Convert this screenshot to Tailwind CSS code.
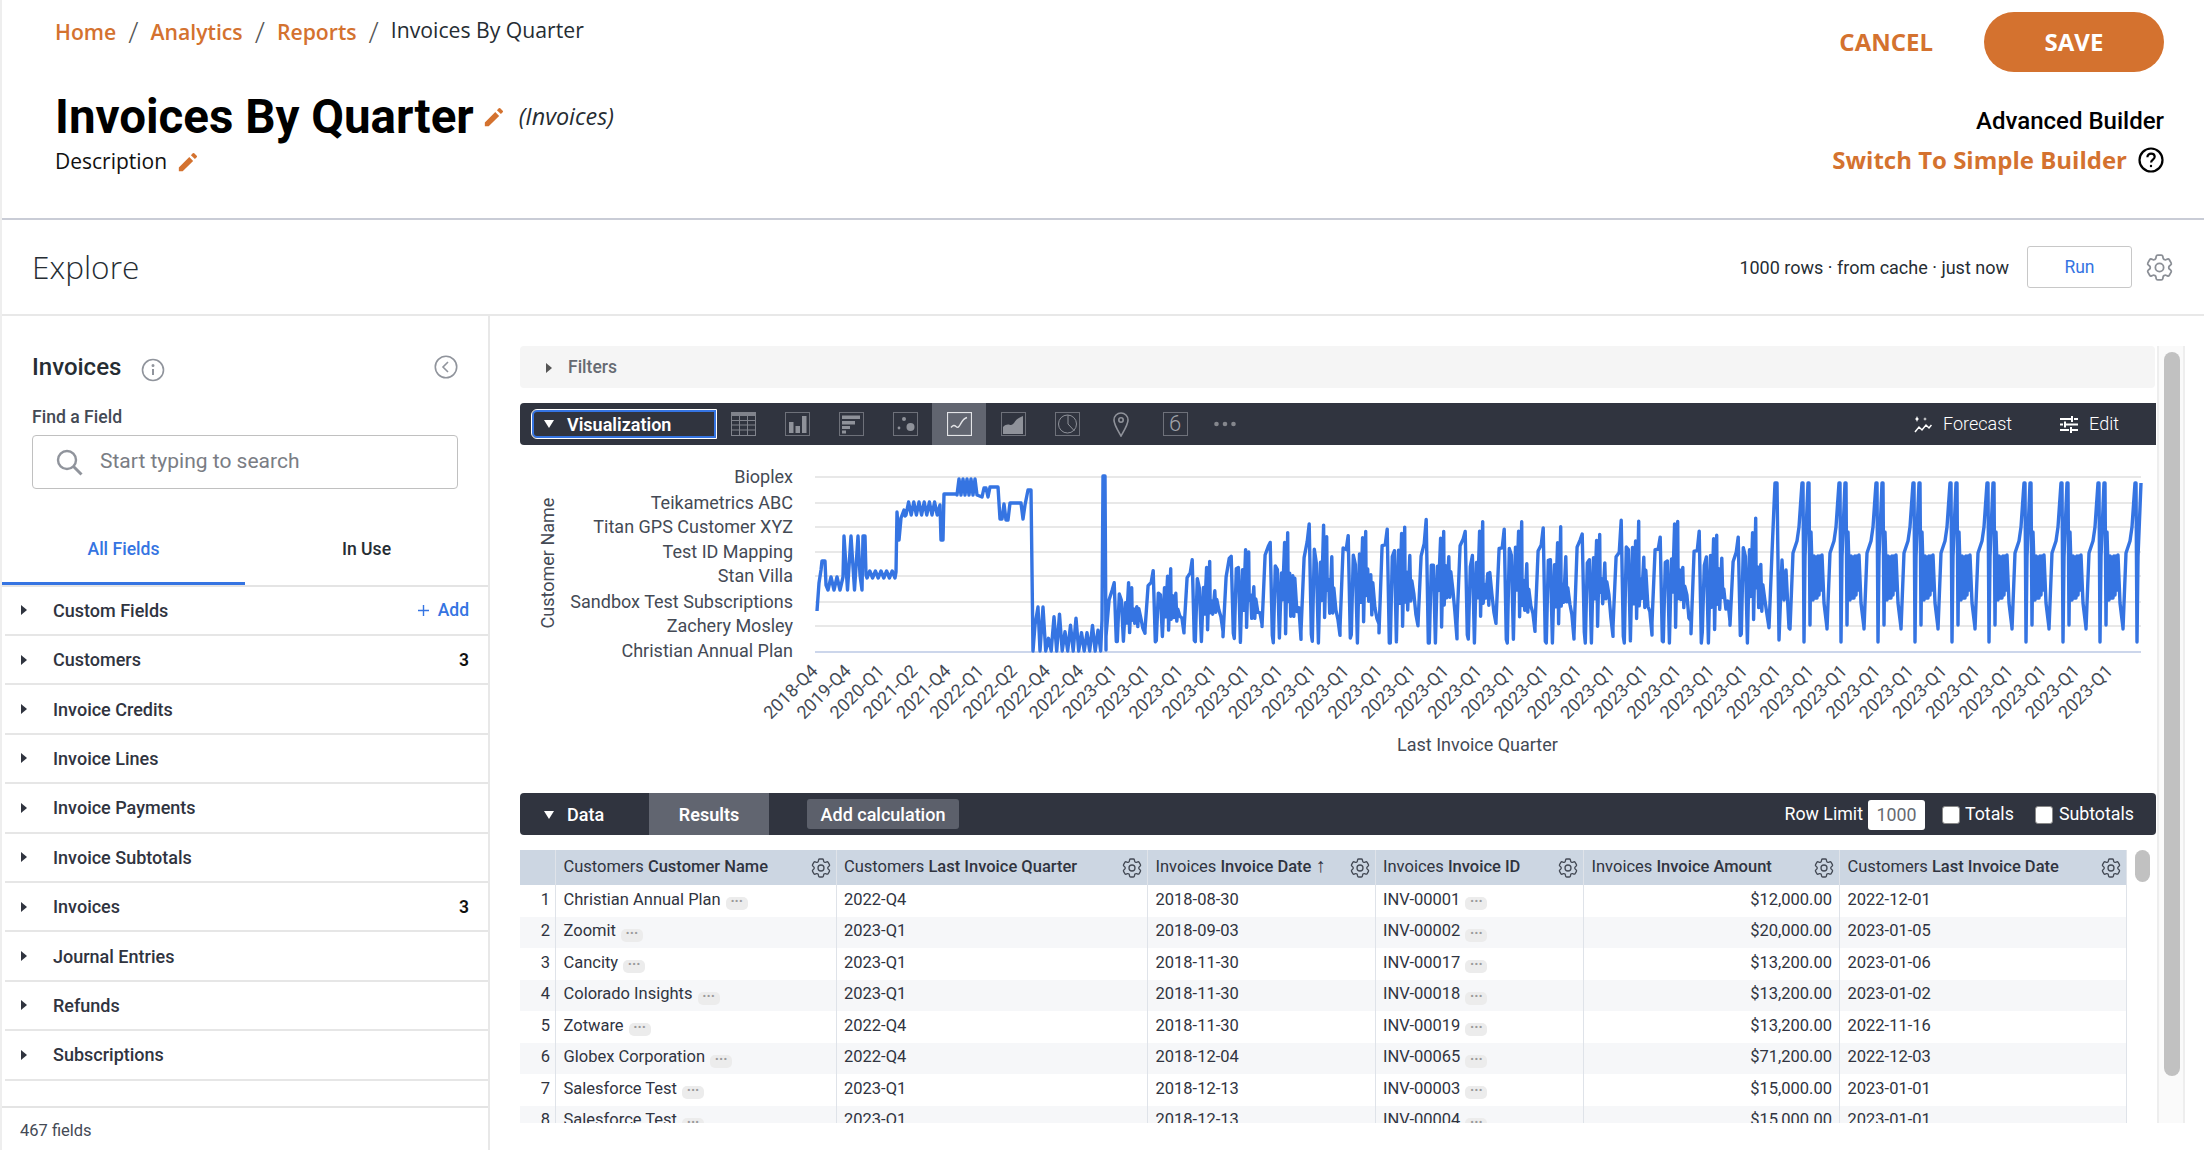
<!DOCTYPE html>
<html lang="en">
<head>
<meta charset="utf-8">
<title>Invoices By Quarter</title>
<script src="https://cdn.jsdelivr.net/npm/@tailwindcss/browser@4"></script>
</head>
<body class="bg-white font-[family-name:Roboto,sans-serif] text-[#30343f]">
<svg class="hidden">
  <symbol id="gear" viewBox="0 0 24 24"><path fill="none" stroke="currentColor" stroke-width="1.3" d="M9.594 3.94c.09-.542.56-.94 1.11-.94h2.593c.55 0 1.02.398 1.11.94l.213 1.281c.063.374.313.686.645.87.074.04.147.083.22.127.325.196.72.257 1.075.124l1.217-.456a1.125 1.125 0 0 1 1.37.49l1.296 2.247a1.125 1.125 0 0 1-.26 1.431l-1.003.827c-.293.241-.438.613-.43.992a7.723 7.723 0 0 1 0 .255c-.008.378.137.75.43.991l1.004.827c.424.35.534.955.26 1.43l-1.298 2.247a1.125 1.125 0 0 1-1.369.491l-1.217-.456c-.355-.133-.75-.072-1.076.124a6.47 6.47 0 0 1-.22.128c-.331.183-.581.495-.644.869l-.213 1.281c-.09.543-.56.94-1.11.94h-2.594c-.55 0-1.019-.398-1.11-.94l-.213-1.281c-.062-.374-.312-.686-.644-.87a6.52 6.52 0 0 1-.22-.127c-.325-.196-.72-.257-1.076-.124l-1.217.456a1.125 1.125 0 0 1-1.369-.49l-1.297-2.247a1.125 1.125 0 0 1 .26-1.431l1.004-.827c.292-.24.437-.613.43-.991a6.932 6.932 0 0 1 0-.255c.007-.38-.138-.751-.43-.992l-1.004-.827a1.125 1.125 0 0 1-.26-1.43l1.297-2.247a1.125 1.125 0 0 1 1.37-.491l1.216.456c.356.133.751.072 1.076-.124.072-.044.146-.086.22-.128.332-.183.582-.495.644-.869l.214-1.28Z"/><circle cx="12" cy="12" r="3" fill="none" stroke="currentColor" stroke-width="1.3"/></symbol>
  <symbol id="pencil" viewBox="0 0 24 24"><path fill="currentColor" d="M2 18v4.2h4.2L17.6 10.8 13.4 6.6 2 18zM21.5 6.8a1.1 1.1 0 000-1.6l-2.7-2.7a1.1 1.1 0 00-1.6 0l-2 2 4.3 4.3 2-2z"/></symbol>
</svg>

<div class="flex h-[1150px] w-[2204px] flex-col overflow-hidden border-l-2 border-[#eeeeee]">

  <!-- Page header -->
  <header class="flex h-[220px] shrink-0 justify-between border-b-2 border-[#c9ccd6]">
    <div class="pl-[53px] pt-[18px]">
      <nav class="flex h-[28px] items-center font-[family-name:'Open_Sans',sans-serif] text-[21.2px] leading-[28px]">
        <a class="font-semibold text-[#d4722f]">Home</a>
        <span class="mx-[12px] text-[30px] font-light text-[#555]">/</span>
        <a class="font-semibold text-[#d4722f]">Analytics</a>
        <span class="mx-[12px] text-[30px] font-light text-[#555]">/</span>
        <a class="font-semibold text-[#d4722f]">Reports</a>
        <span class="mx-[12px] text-[30px] font-light text-[#555]">/</span>
        <strong class="mb-[4px] font-normal text-[#262d33]">Invoices By Quarter</strong>
      </nav>
      <div class="mt-[44px] flex h-[54px] items-center">
        <h1 class="text-[47.5px] font-bold leading-[54px] text-black">Invoices By Quarter</h1>
        <svg class="ml-[9px] h-[22px] w-[22px] text-[#d4722f]"><use href="#pencil"/></svg>
        <em class="ml-[14px] font-[family-name:'Open_Sans',sans-serif] text-[23.4px] italic text-[#262d33]">(Invoices)</em>
      </div>
      <div class="mt-[4px] flex h-[28px] items-center font-[family-name:'Open_Sans',sans-serif] text-[21px] text-[#111]">
        <p>Description</p>
        <svg class="ml-[10px] h-[22px] w-[22px] text-[#d4722f]"><use href="#pencil"/></svg>
      </div>
    </div>
    <div class="flex flex-col items-end pr-[40px] pt-[12px]">
      <div class="flex h-[60px] items-center gap-[51px] font-[family-name:'Open_Sans',sans-serif] font-bold">
        <button class="text-[24px] text-[#d4722f]">CANCEL</button>
        <button class="h-[60px] w-[180px] rounded-full bg-[#d4722f] text-[24px] text-white">SAVE</button>
      </div>
      <div class="mt-[33px] text-[24px] font-medium leading-[32px] text-black">Advanced Builder</div>
      <div class="mt-[6px] flex h-[34px] items-center">
        <a class="font-[family-name:'Open_Sans',sans-serif] text-[24px] font-bold text-[#d4722f]">Switch To Simple Builder</a>
        <svg class="ml-[11px] h-[26px] w-[26px]" viewBox="0 0 26 26" fill="none" stroke="#000" stroke-width="2.2"><circle cx="13" cy="13" r="11.5"/><path d="M9.4 10.2c0-2.2 1.6-3.6 3.7-3.6 2 0 3.6 1.3 3.6 3.2 0 2.7-3.6 2.8-3.6 5.6"/><circle cx="13" cy="19" r=".6" fill="#000" stroke-width="1.2"/></svg>
      </div>
    </div>
  </header>

  <!-- Explore bar -->
  <div class="flex h-[96px] shrink-0 items-center justify-between border-b-2 border-[#e8e8e8] pl-[30px] pr-[28px]">
    <h2 class="font-[family-name:'Open_Sans',sans-serif] text-[31.6px] font-light text-[#262d33]">Explore</h2>
    <div class="flex items-center">
      <p class="text-[18px] text-[#262d33]">1000 rows · from cache · just now</p>
      <button class="ml-[18px] h-[42px] w-[105px] rounded-[3px] border border-[#c8c8c8] text-[17.5px] text-[#3574e2]">Run</button>
      <svg class="ml-[11px] h-[33px] w-[33px] text-[#8b8f96]"><use href="#gear"/></svg>
    </div>
  </div>

  <div class="flex min-h-0 flex-1">
    <!-- Sidebar -->
    <aside class="flex w-[488px] shrink-0 flex-col border-r-2 border-[#e8e8e8]">
      <div class="px-[30px] pt-[36px]">
        <div class="flex h-[30px] items-center justify-between">
          <div class="flex items-center">
            <h3 class="text-[24px] font-medium text-[#262d33]">Invoices</h3>
            <svg class="ml-[20px] mt-[5px] h-[24px] w-[24px]" viewBox="0 0 24 24" fill="none" stroke="#90949c" stroke-width="1.6"><circle cx="12" cy="12" r="10.5"/><path d="M12 11v6" stroke-width="2"/><circle cx="12" cy="7.6" r=".7" fill="#90949c"/></svg>
          </div>
          <svg class="mr-[0.5px] h-[24px] w-[24px]" viewBox="0 0 24 24" fill="none" stroke="#90949c" stroke-width="1.6"><circle cx="12" cy="12" r="10.7"/><path d="M14 7l-5 5 5 5"/></svg>
        </div>
        <div class="mt-[25px] text-[17.6px] font-medium leading-[20px] text-[#444a55]">Find a Field</div>
        <div class="mt-[8px] flex h-[54px] items-center rounded-[4px] border border-[#c0c0c0] pl-[23px]">
          <svg class="h-[27px] w-[27px] shrink-0" viewBox="0 0 27 27" fill="none" stroke="#90949c" stroke-width="2.4"><circle cx="11" cy="11" r="9"/><path d="M17.5 17.5l8 8" stroke-width="3"/></svg>
          <input class="ml-[17px] w-[340px] text-[21px] outline-none placeholder:text-[#7a7d84]" placeholder="Start typing to search">
        </div>
      </div>
      <div class="mt-[36px] grid h-[61.6px] shrink-0 grid-cols-2 border-b-2 border-[#e4e4e4] text-center text-[17.6px] font-medium">
        <button class="h-[60px] border-b-[3px] border-[#3574e2] pb-[9px] text-[#3574e2]">All Fields</button>
        <button class="h-[60px] pb-[12px] text-[#262d33]">In Use</button>
      </div>
      <ul class="ml-[3px] text-[18px] font-medium text-[#30343f] [&>li]:flex [&>li]:h-[49.4px] [&>li]:items-center [&>li]:border-b-2 [&>li]:border-[#e6e6e6] [&>li]:pl-[16px] [&>li]:pr-[19px] [&_i]:mr-[26px] [&_i]:border-y-[5px] [&_i]:border-l-[6px] [&_i]:border-y-transparent [&_i]:border-l-[#30343f]">
        <li><i></i>Custom Fields<span class="ml-auto flex items-center gap-[9px] text-[17.5px] text-[#3574e2]"><svg class="h-[11px] w-[11px]" viewBox="0 0 11 11" stroke="#3574e2" stroke-width="1.4"><path d="M5.5 0v11M0 5.5h11"/></svg><span>Add</span></span></li>
        <li><i></i>Customers<b class="ml-auto text-[17.5px] font-semibold text-[#111]">3</b></li>
        <li><i></i>Invoice Credits</li>
        <li><i></i>Invoice Lines</li>
        <li><i></i>Invoice Payments</li>
        <li><i></i>Invoice Subtotals</li>
        <li><i></i>Invoices<b class="ml-auto text-[17.5px] font-semibold text-[#111]">3</b></li>
        <li><i></i>Journal Entries</li>
        <li><i></i>Refunds</li>
        <li><i></i>Subscriptions</li>
      </ul>
      <div class="mt-auto flex h-[44px] shrink-0 items-center border-t-2 border-[#e4e4e4] pl-[18px] pt-[4px] text-[16.5px] text-[#444a55]">467 fields</div>
    </aside>

    <!-- Main -->
    <main class="flex h-[807px] min-w-0 flex-1 overflow-hidden pl-[30px] pt-[30px]">
      <div class="w-[1636px] shrink-0">
        <div class="flex h-[42px] w-[1635px] items-center rounded-[4px] bg-[#f5f5f5] pl-[26px] pt-[1px] text-[17.5px] font-medium text-[#666a72]">
          <i class="mr-[16px] border-y-[5px] border-l-[6px] border-y-transparent border-l-[#555]"></i>Filters
        </div>

        <!-- Visualization bar -->
        <div class="mt-[15px] flex h-[42px] items-center rounded-l-[4px] bg-[#30343f] pl-[12px] text-white">
          <div class="flex h-[28px] w-[184px] items-center rounded-l-[5px] border-2 border-[#3574e2] pl-[10px] text-[18px] font-semibold outline outline-1 outline-white">
            <i class="mr-[13px] border-x-[5.5px] border-t-[8px] border-x-transparent border-t-white"></i>Visualization
          </div>
          <div class="flex h-[42px] items-center [&>div]:flex [&>div]:h-[42px] [&>div]:w-[54px] [&>div]:items-center [&>div]:justify-center">
            <div>
              <svg class="h-[24px] w-[25px]" viewBox="0 0 25 24" fill="none" stroke="#80838c"><rect x=".5" y=".5" width="24" height="23"/><path d="M0 2.5h25" stroke-width="3"/><path d="M8.5 4v20M16.5 4v20M0 8.5h25M0 13h25M0 18h25"/></svg>
            </div>
            <div>
              <svg class="h-[24px] w-[25px]" viewBox="0 0 25 24" fill="#8f929a" stroke="none"><rect x=".5" y=".5" width="24" height="23" fill="none" stroke="#6e717a"/><rect x="4" y="10" width="4.5" height="11"/><rect x="10.5" y="14" width="4.5" height="7"/><rect x="17" y="4" width="4.5" height="17"/></svg>
            </div>
            <div>
              <svg class="h-[24px] w-[25px]" viewBox="0 0 25 24" fill="#8f929a" stroke="none"><rect x=".5" y=".5" width="24" height="23" fill="none" stroke="#6e717a"/><rect x="3" y="3.5" width="18" height="3.5"/><rect x="3" y="9" width="13" height="3.5"/><rect x="3" y="14" width="8" height="3"/><rect x="3" y="18.5" width="4" height="3"/></svg>
            </div>
            <div>
              <svg class="h-[24px] w-[25px]" viewBox="0 0 25 24" fill="#8f929a" stroke="none"><rect x=".5" y=".5" width="24" height="23" fill="none" stroke="#6e717a"/><circle cx="11" cy="7" r="2"/><circle cx="17.5" cy="15" r="4"/><circle cx="6" cy="16" r="1.4"/></svg>
            </div>
            <div class="bg-[#616570]">
              <svg class="h-[24px] w-[25px]" viewBox="0 0 25 24" fill="none" stroke="#e3e4e7"><rect x=".5" y=".5" width="24" height="23" stroke-width="1.2"/><path d="M4 15.5c2-2.5 3.500-2.500 5-1s2.500 1 4-1.500 3-6.500 7-7.500" stroke-width="1.4"/></svg>
            </div>
            <div>
              <svg class="h-[24px] w-[25px]" viewBox="0 0 25 24" fill="#8f929a" stroke="none"><rect x=".5" y=".5" width="24" height="23" fill="none" stroke="#6e717a"/><path d="M2 22v-7c2.500-2.500 5-3 7-2 2 .5 3.500-1 5-3.500 2-2.500 4-4 8-5.500v18z"/></svg>
            </div>
            <div>
              <svg class="h-[24px] w-[25px]" viewBox="0 0 25 24" fill="none" stroke="#8f929a"><rect x=".5" y=".5" width="24" height="23" stroke="#6e717a"/><circle cx="12.500" cy="12" r="9"/><path d="M13 3v9l6.500 7"/></svg>
            </div>
            <div>
              <svg class="h-[26px] w-[18px]" viewBox="0 0 18 26" fill="none" stroke="#8f929a" stroke-width="1.6"><path d="M9 25C5 18 2 13.500 2 9a7 7 0 0114 0c0 4.500-3 9-7 16z"/><circle cx="9" cy="9" r="2.200"/></svg>
            </div>
            <div>
              <div class="flex h-[24px] w-[25px] items-center justify-center border border-[#6e717a] text-[22px] font-light leading-none text-[#a0a3aa]">6</div>
            </div>
            <div class="!justify-start pl-[11px]">
              <svg class="h-[6px] w-[24px]" viewBox="0 0 24 6" fill="#85878d"><circle cx="3.500" cy="3" r="2.300"/><circle cx="12" cy="3" r="2.300"/><circle cx="20.500" cy="3" r="2.300"/></svg>
            </div>
          </div>
          <div class="ml-auto flex items-center pb-[1px] pr-[37px] text-[18px] font-light">
            <svg class="h-[18px] w-[18px]" viewBox="0 0 18 18" fill="none" stroke="#fff" stroke-width="1.5"><path d="M1 17l4-5 3 3 4-5 3 3 2.500-3"/><path d="M3 7l.8-2L5 4l-1.200-1L3 1l-.8 2L1 4l1.200 1zM11 6l.5-1.500L13 4l-1.500-.5L11 2l-.5 1.500L9 4l1.500.5z" fill="#fff" stroke="none"/></svg>
            <span class="ml-[11px]">Forecast</span>
            <svg class="ml-[48px] h-[18px] w-[18px]" viewBox="0 0 18 18" stroke="#fff" stroke-width="2"><path d="M0 4h11M14 4h4M12 1v6M0 9.500h3M6 9.500h12M5 6.500v6M0 15h9M12 15h6M11 12v6"/></svg>
            <span class="ml-[11px]">Edit</span>
          </div>
        </div>

        <!-- Chart -->
        <svg class="block h-[348px] w-[1636px]" viewBox="520 445 1636 348">
          <g stroke="#e8e8e8" stroke-width="2">
            <path d="M815 477H2141M815 503H2141M815 527H2141M815 552H2141M815 576H2141M815 602H2141M815 626H2141"/>
            <path d="M815 652H2141" stroke="#ccd6eb"/>
          </g>
          <g class="fill-[#444a55] text-[18px]" text-anchor="end" dominant-baseline="central">
            <text x="793" y="476">Bioplex</text>
            <text x="793" y="502">Teikametrics ABC</text>
            <text x="793" y="526">Titan GPS Customer XYZ</text>
            <text x="793" y="551">Test ID Mapping</text>
            <text x="793" y="575">Stan Villa</text>
            <text x="793" y="601">Sandbox Test Subscriptions</text>
            <text x="793" y="625">Zachery Mosley</text>
            <text x="793" y="650">Christian Annual Plan</text>
          </g>
          <text class="fill-[#444a55] text-[18px]" text-anchor="middle" transform="rotate(-90 547 563)" x="547" y="563" dominant-baseline="central">Customer Name</text>
          <polyline id="series" fill="none" stroke="#3574e2" stroke-width="3.4" stroke-linejoin="round" points=""/>
          <g class="fill-[#444a55] text-[18px]" text-anchor="end">
            <text x="819" y="672" transform="rotate(-45 819 672)">2018-Q4</text>
            <text x="852.2" y="672" transform="rotate(-45 852.2 672)">2019-Q4</text>
            <text x="885.4" y="672" transform="rotate(-45 885.4 672)">2020-Q1</text>
            <text x="918.6" y="672" transform="rotate(-45 918.6 672)">2021-Q2</text>
            <text x="951.8" y="672" transform="rotate(-45 951.8 672)">2021-Q4</text>
            <text x="985" y="672" transform="rotate(-45 985 672)">2022-Q1</text>
            <text x="1018.2" y="672" transform="rotate(-45 1018.2 672)">2022-Q2</text>
            <text x="1051.4" y="672" transform="rotate(-45 1051.4 672)">2022-Q4</text>
            <text x="1084.6" y="672" transform="rotate(-45 1084.6 672)">2022-Q4</text>
            <text x="1117.8" y="672" transform="rotate(-45 1117.8 672)">2023-Q1</text>
            <text x="1151" y="672" transform="rotate(-45 1151 672)">2023-Q1</text>
            <text x="1184.2" y="672" transform="rotate(-45 1184.2 672)">2023-Q1</text>
            <text x="1217.4" y="672" transform="rotate(-45 1217.4 672)">2023-Q1</text>
            <text x="1250.6" y="672" transform="rotate(-45 1250.6 672)">2023-Q1</text>
            <text x="1283.8" y="672" transform="rotate(-45 1283.8 672)">2023-Q1</text>
            <text x="1317" y="672" transform="rotate(-45 1317 672)">2023-Q1</text>
            <text x="1350.2" y="672" transform="rotate(-45 1350.2 672)">2023-Q1</text>
            <text x="1383.4" y="672" transform="rotate(-45 1383.4 672)">2023-Q1</text>
            <text x="1416.6" y="672" transform="rotate(-45 1416.6 672)">2023-Q1</text>
            <text x="1449.8" y="672" transform="rotate(-45 1449.8 672)">2023-Q1</text>
            <text x="1483" y="672" transform="rotate(-45 1483 672)">2023-Q1</text>
            <text x="1516.2" y="672" transform="rotate(-45 1516.2 672)">2023-Q1</text>
            <text x="1549.4" y="672" transform="rotate(-45 1549.4 672)">2023-Q1</text>
            <text x="1582.6" y="672" transform="rotate(-45 1582.6 672)">2023-Q1</text>
            <text x="1615.8" y="672" transform="rotate(-45 1615.8 672)">2023-Q1</text>
            <text x="1649" y="672" transform="rotate(-45 1649 672)">2023-Q1</text>
            <text x="1682.2" y="672" transform="rotate(-45 1682.2 672)">2023-Q1</text>
            <text x="1715.4" y="672" transform="rotate(-45 1715.4 672)">2023-Q1</text>
            <text x="1748.6" y="672" transform="rotate(-45 1748.6 672)">2023-Q1</text>
            <text x="1781.8" y="672" transform="rotate(-45 1781.8 672)">2023-Q1</text>
            <text x="1815" y="672" transform="rotate(-45 1815 672)">2023-Q1</text>
            <text x="1848.2" y="672" transform="rotate(-45 1848.2 672)">2023-Q1</text>
            <text x="1881.4" y="672" transform="rotate(-45 1881.4 672)">2023-Q1</text>
            <text x="1914.6" y="672" transform="rotate(-45 1914.6 672)">2023-Q1</text>
            <text x="1947.8" y="672" transform="rotate(-45 1947.8 672)">2023-Q1</text>
            <text x="1981" y="672" transform="rotate(-45 1981 672)">2023-Q1</text>
            <text x="2014.2" y="672" transform="rotate(-45 2014.2 672)">2023-Q1</text>
            <text x="2047.4" y="672" transform="rotate(-45 2047.4 672)">2023-Q1</text>
            <text x="2080.6" y="672" transform="rotate(-45 2080.6 672)">2023-Q1</text>
            <text x="2113.8" y="672" transform="rotate(-45 2113.8 672)">2023-Q1</text>
          </g>
          <text class="fill-[#444a55] text-[18px]" x="1477.5" y="744" text-anchor="middle" dominant-baseline="central">Last Invoice Quarter</text>
        </svg>

        <!-- Data bar -->
        <div class="flex h-[42px] items-center rounded-[4px] bg-[#30343f] pl-[24px] pt-[1px] text-[18px] font-medium text-white">
          <i class="mr-[13px] border-x-[5.5px] border-t-[8px] border-x-transparent border-t-white"></i>
          <span class="w-[82px]">Data</span>
          <div class="-mt-[1px] flex h-[42px] w-[120px] items-center justify-center bg-[#616570] pt-[1px] font-semibold">Results</div>
          <button class="-mt-[1px] ml-[38px] h-[30px] w-[152px] rounded-[3px] bg-[#5c606b] pt-[1px]">Add calculation</button>
          <div class="ml-auto flex items-center pr-[22px] text-[17.8px] font-normal">
            <span>Row Limit</span>
            <input class="ml-[5px] h-[30px] w-[57px] rounded-[3px] bg-white text-center text-[#666a72]" value="1000">
            <input type="checkbox" class="ml-[17px] h-[18px] w-[18px] appearance-none rounded-[3px] border border-[#888] bg-white">
            <span class="ml-[5px]">Totals</span>
            <input type="checkbox" class="ml-[21px] h-[18px] w-[18px] appearance-none rounded-[3px] border border-[#888] bg-white">
            <span class="ml-[6px]">Subtotals</span>
          </div>
        </div>

        <!-- Results table -->
        <div class="mt-[15px] flex">
          <div class="w-[1607px] shrink-0 text-[16.5px] text-[#30343f] [&>div]:grid [&>div]:grid-cols-[36px_280.5px_311.5px_227.5px_208.5px_256px_287px] [&>div>div]:flex [&>div>div]:items-center [&>div>div]:border-r [&>div>div]:border-[#dfe3e9] [&>div>div]:pl-[7.5px] [&>div>div:first-child]:justify-end [&>div>div:first-child]:pr-[5px] [&_span]:ml-[5px] [&_span]:mt-[7px] [&_span]:h-[13px] [&_span]:w-[22px] [&_span]:rounded-[5px] [&_span]:bg-[#ececec] [&_span]:text-center [&_span]:text-[14px] [&_span]:font-bold [&_span]:leading-[8px] [&_span]:text-[#999]">
            <div class="h-[35px] bg-[#ccd6e2] [&>div]:border-[#bcc7d4] [&_b]:font-medium [&_svg]:ml-auto [&_svg]:mr-[3px] [&_svg]:h-[24px] [&_svg]:w-[24px] [&_svg]:text-[#444a55]">
              <div></div>
              <div><div>Customers <b>Customer Name</b></div><svg><use href="#gear"/></svg></div>
              <div><div>Customers <b>Last Invoice Quarter</b></div><svg><use href="#gear"/></svg></div>
              <div><div>Invoices <b>Invoice Date</b> <em class="text-[20px] not-italic leading-none">↑</em></div><svg><use href="#gear"/></svg></div>
              <div><div>Invoices <b>Invoice ID</b></div><svg><use href="#gear"/></svg></div>
              <div><div>Invoices <b>Invoice Amount</b></div><svg><use href="#gear"/></svg></div>
              <div><div>Customers <b>Last Invoice Date</b></div><svg><use href="#gear"/></svg></div>
            </div>
            <div class="h-[31.5px] [&>div]:pb-[1px]"><div>1</div><div>Christian Annual Plan<span>···</span></div><div>2022-Q4</div><div>2018-08-30</div><div>INV-00001<span>···</span></div><div class="justify-end pr-[7px]">$12,000.00</div><div>2022-12-01</div></div>
            <div class="h-[31.5px] bg-[#f6f7f9] [&>div]:pb-[1px]"><div>2</div><div>Zoomit<span>···</span></div><div>2023-Q1</div><div>2018-09-03</div><div>INV-00002<span>···</span></div><div class="justify-end pr-[7px]">$20,000.00</div><div>2023-01-05</div></div>
            <div class="h-[31.5px] [&>div]:pb-[1px]"><div>3</div><div>Cancity<span>···</span></div><div>2023-Q1</div><div>2018-11-30</div><div>INV-00017<span>···</span></div><div class="justify-end pr-[7px]">$13,200.00</div><div>2023-01-06</div></div>
            <div class="h-[31.5px] bg-[#f6f7f9] [&>div]:pb-[1px]"><div>4</div><div>Colorado Insights<span>···</span></div><div>2023-Q1</div><div>2018-11-30</div><div>INV-00018<span>···</span></div><div class="justify-end pr-[7px]">$13,200.00</div><div>2023-01-02</div></div>
            <div class="h-[31.5px] [&>div]:pb-[1px]"><div>5</div><div>Zotware<span>···</span></div><div>2022-Q4</div><div>2018-11-30</div><div>INV-00019<span>···</span></div><div class="justify-end pr-[7px]">$13,200.00</div><div>2022-11-16</div></div>
            <div class="h-[31.5px] bg-[#f6f7f9] [&>div]:pb-[1px]"><div>6</div><div>Globex Corporation<span>···</span></div><div>2022-Q4</div><div>2018-12-04</div><div>INV-00065<span>···</span></div><div class="justify-end pr-[7px]">$71,200.00</div><div>2022-12-03</div></div>
            <div class="h-[31.5px] [&>div]:pb-[1px]"><div>7</div><div>Salesforce Test<span>···</span></div><div>2023-Q1</div><div>2018-12-13</div><div>INV-00003<span>···</span></div><div class="justify-end pr-[7px]">$15,000.00</div><div>2023-01-01</div></div>
            <div class="h-[31.5px] bg-[#f6f7f9] [&>div]:pb-[1px]"><div>8</div><div>Salesforce Test<span>···</span></div><div>2023-Q1</div><div>2018-12-13</div><div>INV-00004<span>···</span></div><div class="justify-end pr-[7px]">$15,000.00</div><div>2023-01-01</div></div>
          </div>
          <div class="ml-[7.5px] h-[32px] w-[15.5px] rounded-full bg-[#c1c1c1]"></div>
        </div>
      </div>

      <!-- Page scrollbar -->
      <div class="ml-[1px] h-full w-[28px] shrink-0 border-x-2 border-[#eeeeee] bg-[#fafafa] pl-[5px] pt-[6px]">
        <div class="h-[724px] w-[16px] rounded-full bg-[#c1c1c1]"></div>
      </div>
    </main>
  </div>
</div>

<script>
  var seed = 7;
  function rnd() { seed = (seed * 16807) % 2147483647; return seed / 2147483647; }
  var pts = [[817,611],[819,583],[821,570],[822,561],[825,561],[826,585]];
  function zig(x0, x1, s, a, b) { for (var x = x0, i = 0; x <= x1; x += s, i++) pts.push([x, i % 2 ? a : b]); }
  zig(828, 843, 3, 577, 590);
  zig(844, 858, 3.5, 590, 536);
  pts.push([860,575],[862,590],[863,536],[865,536],[866,575]);
  zig(867, 895, 2.8, 571, 578);
  pts.push([896,572],[897,512],[899,540],[901,518],[904,510],[905,516]);
  zig(906, 938, 2.6, 502, 515);
  pts.push([940,505],[941,540],[943,540],[944,494],[957,494]);
  zig(957, 975, 2, 479, 495);
  pts.push([977,495],[982,497],[984,488],[986,488],[988,497],[990,487],[998,487],[1000,519],[1002,519],[1004,504],[1006,520],[1008,520],[1010,503],[1021,503],[1023,519],[1025,505],[1028,490],[1031,490],[1033,651],[1035,625],[1038,607],[1040,651]);
  for (var x = 1043; x < 1099; x += 5.5) { pts.push([x, 607 + rnd() * 34]); pts.push([x + 2.7, 651]); }
  pts.push([1102,620],[1103,476],[1105,476],[1106,650]);

  var mid = [[0,630],[3,553],[6,545],[8,528],[10,640],[11,640],[13,557],[15,557],[17,643],[19,557],[20,600],[22,533],[23,625],[25,527],[25.5,597],[27,575],[28,605],[30,565],[31,605],[32,580],[34,600],[36,610],[38,630]];
  for (var base = 1106; base < 1760; base += 39) {
    var a = Math.min(1, 0.5 + (base - 1106) / 200 * 0.5);
    mid.forEach(function (p) {
      var y = p[1] + (rnd() - 0.5) * 20;
      pts.push([base + p[0] * 39 / 38, 640 - (640 - Math.min(y, 643)) * a]);
    });
  }
  pts.push([1772,553],[1775,483],[1777,483],[1779,640],[1782,560],[1784,600],[1786,570],[1789,628]);

  var last = [[0,629],[3,553],[7,541],[9,527],[12,483],[13,483],[14,642],[15,557],[18,483],[19,483],[20,625],[21,532],[23,600],[24,556],[25,598],[26,557],[27,598],[28,556],[29,595],[30,556],[31,590],[32,555],[34,603],[37,628]];
  for (var b = 1790; b < 2141; b += 37) {
    last.forEach(function (p) { pts.push([b + p[0], p[1]]); });
  }
  var kept = pts.filter(function (p) { return p[0] <= 2141; });
  document.getElementById('series').setAttribute('points', kept.map(function (p) { return p[0].toFixed(1) + ',' + p[1].toFixed(1); }).join(' '));
</script>
</body>
</html>
